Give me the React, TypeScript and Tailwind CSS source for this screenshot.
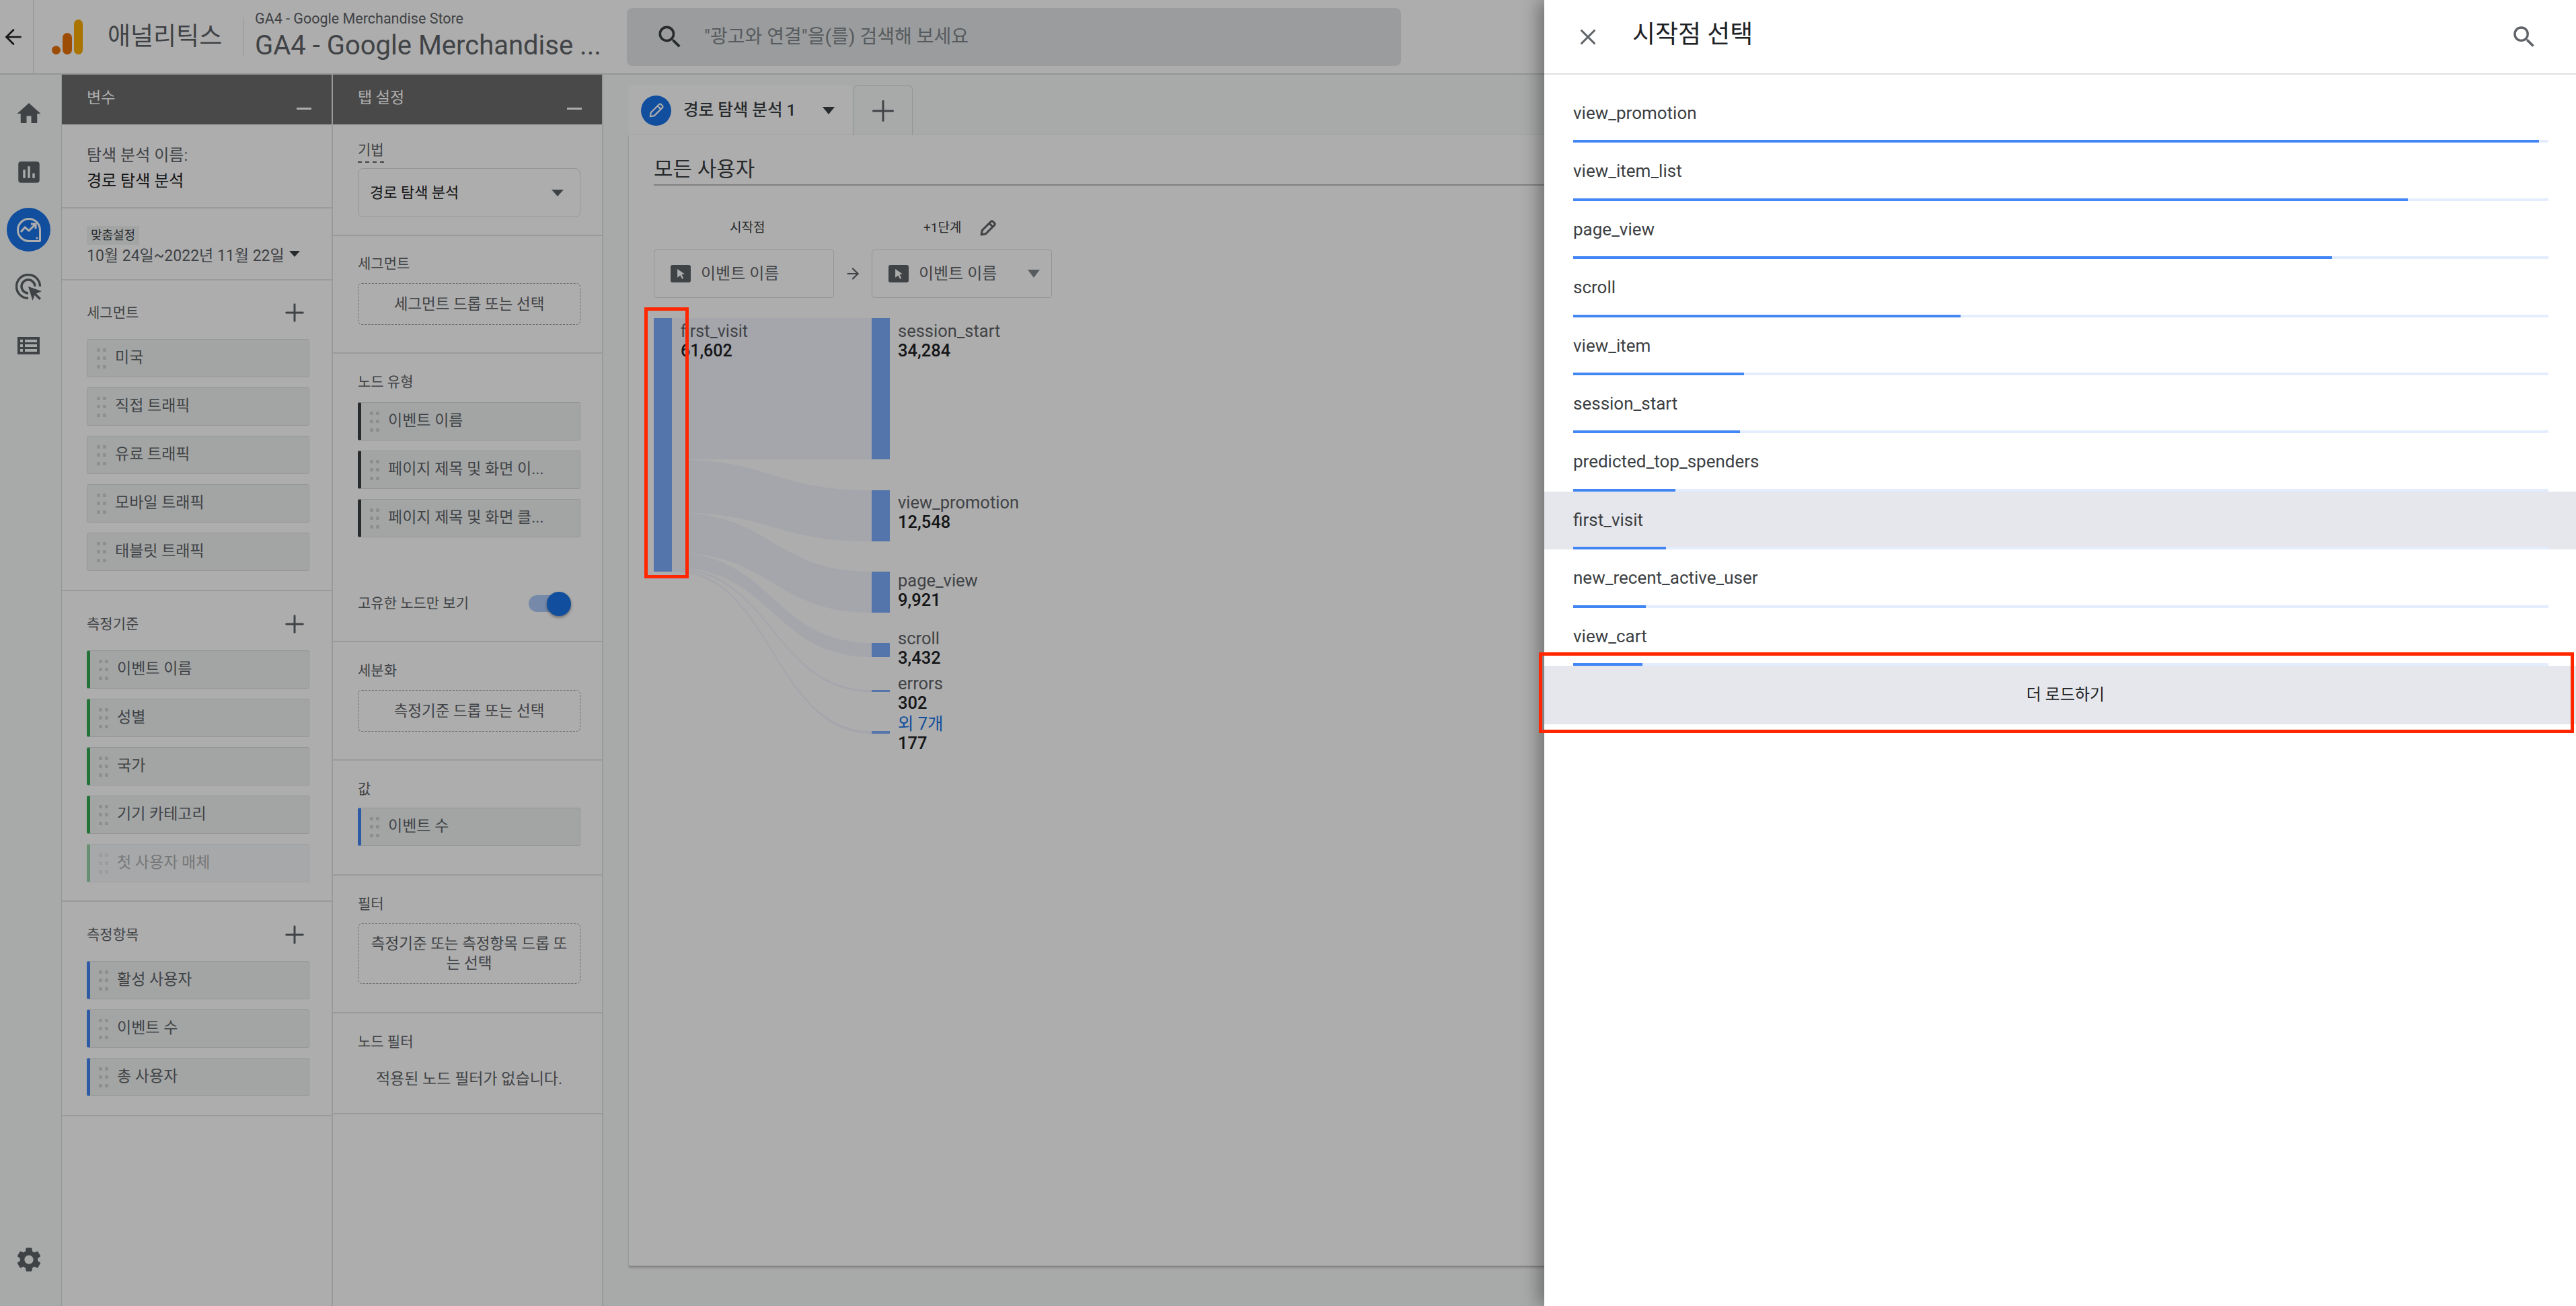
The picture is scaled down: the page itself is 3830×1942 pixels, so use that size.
import { ReactNode } from "react";
import { X, Plus, ArrowLeft, ArrowRight } from "lucide-react";

const drawerRows = [
  { name: "view_promotion", pct: 99 },
  { name: "view_item_list", pct: 85.6 },
  { name: "page_view", pct: 77.8 },
  { name: "scroll", pct: 39.7 },
  { name: "view_item", pct: 17.5 },
  { name: "session_start", pct: 17.1 },
  { name: "predicted_top_spenders", pct: 10.5 },
  { name: "first_visit", pct: 9.5, active: true },
  { name: "new_recent_active_user", pct: 7.45 },
  { name: "view_cart", pct: 7.1 },
];

const sankeyLabels = [
  { name: "session_start", value: "34,284", mt: "mt-0" },
  { name: "view_promotion", value: "12,548", mt: "mt-[197px]" },
  { name: "page_view", value: "9,921", mt: "mt-[58px]" },
  { name: "scroll", value: "3,432", mt: "mt-[28px]" },
  { name: "errors", value: "302", mt: "mt-[9px]" },
  { name: "외 7개", value: "177", mt: "mt-[2px]", link: true },
];

const Drag = () => (
  <span className="grid h-[30px] w-[14px] shrink-0 grid-cols-2 content-between gap-x-[4px]">
    {[0, 1, 2, 3, 4, 5].map((i) => (
      <span key={i} className="h-[5px] w-[5px] bg-[#d2d3d4]" />
    ))}
  </span>
);

interface ChipProps {
  label: string;
  accent?: string;
  dim?: boolean;
}

const Chip = ({ label, accent, dim }: ChipProps) => (
  <div
    className={`flex h-[57px] items-center gap-[13px] rounded-[3px] border border-[#dadce0] bg-[#f1f3f4] pr-3 ${
      accent ? `border-l-[5px] pl-[13px] ${accent}` : "pl-[14px]"
    } ${dim ? "opacity-50" : ""}`}
  >
    <Drag />
    <span className="truncate text-[23px] text-[#5f6368]">{label}</span>
  </div>
);

const PanelHeader = ({ title }: { title: string }) => (
  <div className="relative flex h-[74px] shrink-0 items-center bg-[#6c6c6c] pl-[37px] pb-[4px] text-[23px] text-white">
    {title}
    <span className="absolute bottom-[22px] right-[30px] h-[3px] w-[22px] bg-white" />
  </div>
);

const Section = ({
  className,
  children,
}: {
  className: string;
  children: ReactNode;
}) => <section className={`shrink-0 border-b-2 border-[#e3e3e3] ${className}`}>{children}</section>;

const ChipGroup = ({
  title,
  children,
  className,
}: {
  title: string;
  children: ReactNode;
  className: string;
}) => (
  <Section className={`pl-[37px] pr-[33px] ${className}`}>
    <div className="flex h-[36px] items-center justify-between">
      <span className="text-[21px] leading-[30px] text-[#5f6368]">{title}</span>
      <Plus className="mr-[1px] h-[42px] w-[42px] text-[#5f6368]" strokeWidth={1.7} />
    </div>
    <div className="mt-[21px] flex flex-col gap-[15px]">{children}</div>
  </Section>
);

const Dropzone = ({ children, className }: { children: ReactNode; className: string }) => (
  <div
    className={`mt-[14px] flex items-center justify-center rounded-[6px] border border-dashed border-[#9aa0a6] px-[14px] text-center text-[22.5px] leading-[29px] break-all text-[#5f6368] ${className}`}
  >
    {children}
  </div>
);

const Label = ({ children }: { children: ReactNode }) => (
  <div className="text-[21px] leading-[30px] text-[#5f6368]">{children}</div>
);

const VariablesPanel = () => (
  <div className="flex w-[403px] shrink-0 flex-col border-r-2 border-[#e3e3e3]">
    <PanelHeader title="변수" />
    <Section className="h-[125px] pl-[37px] pr-[33px] pt-[31px]">
      <div className="text-[24px] leading-[30px] text-[#5f6368]">탐색 분석 이름:</div>
      <div className="mt-[8px] text-[24px] leading-[30px] text-[#202124]">경로 탐색 분석</div>
    </Section>
    <Section className="h-[107px] pl-[37px] pr-[33px] pt-[26px]">
      <span className="block w-[78px] bg-[#f1f3f4] text-center text-[18px] leading-[28px] text-[#3c4043]">
        맞춤설정
      </span>
      <div className="flex items-start text-[23px] leading-[34px] text-[#5f6368]">
        10월 24일~2022년 11월 22일
        <span className="ml-[7px] mt-[9px] h-0 w-0 border-x-[8px] border-t-[9px] border-x-transparent border-t-[#3c4043]" />
      </div>
    </Section>
    <ChipGroup title="세그먼트" className="h-[462px] pt-[30px]">
      {["미국", "직접 트래픽", "유료 트래픽", "모바일 트래픽", "태블릿 트래픽"].map((s) => (
        <Chip key={s} label={s} />
      ))}
    </ChipGroup>
    <ChipGroup title="측정기준" className="h-[462px] pt-[31px]">
      <Chip label="이벤트 이름" accent="border-l-[#34a853]" />
      <Chip label="성별" accent="border-l-[#34a853]" />
      <Chip label="국가" accent="border-l-[#34a853]" />
      <Chip label="기기 카테고리" accent="border-l-[#34a853]" />
      <Chip label="첫 사용자 매체" accent="border-l-[#34a853]" dim />
    </ChipGroup>
    <ChipGroup title="측정항목" className="h-[319px] pt-[31px]">
      <Chip label="활성 사용자" accent="border-l-[#4285f4]" />
      <Chip label="이벤트 수" accent="border-l-[#4285f4]" />
      <Chip label="총 사용자" accent="border-l-[#4285f4]" />
    </ChipGroup>
  </div>
);

const SettingsPanel = () => (
  <div className="flex w-[402px] shrink-0 flex-col border-r-2 border-[#e3e3e3]">
    <PanelHeader title="탭 설정" />
    <Section className="h-[166px] border-b pl-[37px] pr-[32px] pt-[23px]">
      <div className="inline-block border-b-2 border-dashed border-[#5f6368] pb-[2px] text-[21px] leading-[30px] text-[#5f6368]">
        기법
      </div>
      <div className="mt-[8px] flex h-[73px] items-center justify-between rounded-[8px] border border-[#dadce0] pl-[17px] pr-[24px] text-[22px] text-[#202124]">
        경로 탐색 분석
        <span className="h-0 w-0 border-x-[9px] border-t-[10px] border-x-transparent border-t-[#5f6368]" />
      </div>
    </Section>
    <Section className="h-[175px] pl-[37px] pr-[32px] pt-[26px]">
      <Label>세그먼트</Label>
      <Dropzone className="h-[62px]">세그먼트 드롭 또는 선택</Dropzone>
    </Section>
    <Section className="h-[429px] pl-[37px] pr-[32px] pt-[27px]">
      <Label>노드 유형</Label>
      <div className="mt-[15px] flex flex-col gap-[15px]">
        <Chip label="이벤트 이름" accent="border-l-[#3c4043]" />
        <Chip label="페이지 제목 및 화면 이..." accent="border-l-[#3c4043]" />
        <Chip label="페이지 제목 및 화면 클..." accent="border-l-[#3c4043]" />
      </div>
      <div className="mt-[83px] flex items-center justify-between pr-[33px]">
        <Label>고유한 노드만 보기</Label>
        <span className="relative h-[25px] w-[44px] rounded-full bg-[#aecbfa]">
          <span className="absolute -right-[19px] -top-[5px] h-[36px] w-[36px] rounded-full bg-[#1a73e8] shadow-[0_2px_4px_rgba(0,0,0,0.4)]" />
        </span>
      </div>
    </Section>
    <Section className="h-[176px] pl-[37px] pr-[32px] pt-[27px]">
      <Label>세분화</Label>
      <Dropzone className="h-[62px]">측정기준 드롭 또는 선택</Dropzone>
    </Section>
    <Section className="h-[171px] pl-[37px] pr-[32px] pt-[27px]">
      <Label>값</Label>
      <div className="mt-[13px]">
        <Chip label="이벤트 수" accent="border-l-[#4285f4]" />
      </div>
    </Section>
    <Section className="h-[205px] pl-[37px] pr-[32px] pt-[27px]">
      <Label>필터</Label>
      <Dropzone className="h-[90px]">측정기준 또는 측정항목 드롭 또는 선택</Dropzone>
    </Section>
    <Section className="h-[150px] pl-[37px] pr-[32px] pt-[27px]">
      <Label>노드 필터</Label>
      <div className="mt-[26px] text-center text-[23px] leading-[30px] text-[#5f6368]">
        적용된 노드 필터가 없습니다.
      </div>
    </Section>
  </div>
);

const HomeIcon = () => (
  <svg viewBox="0 0 24 24" className="h-[42px] w-[42px] fill-[#5f6368]">
    <path d="M10 20v-6h4v6h5v-8h3L12 3 2 12h3v8z" />
  </svg>
);

const ReportsIcon = () => (
  <svg viewBox="0 0 24 24" className="h-[42px] w-[42px] fill-[#5f6368]">
    <path d="M19 3H5c-1.1 0-2 .9-2 2v14c0 1.1.9 2 2 2h14c1.1 0 2-.9 2-2V5c0-1.1-.9-2-2-2zM9 17H7v-7h2v7zm4 0h-2V7h2v10zm4 0h-2v-4h2v4z" />
  </svg>
);

const ExploreIcon = () => (
  <svg viewBox="0 0 40 40" className="h-[40px] w-[40px]" fill="none" stroke="#fff" strokeWidth="3">
    <path d="M20 3.5a16.5 16.5 0 0 0 0 33h15.5a1 1 0 0 0 1-1V20A16.5 16.5 0 0 0 20 3.5z" />
    <path d="M8 23l6-7 6 5 9-9M23 11h7v7" />
    <circle cx="32" cy="32" r="1.6" fill="#fff" stroke="none" />
  </svg>
);

const AdvertisingIcon = () => (
  <svg viewBox="0 0 40 40" className="h-[40px] w-[40px]" fill="none" stroke="#5f6368" strokeWidth="3.4">
    <path d="M19 36.5A17.5 17.5 0 1 1 36.5 19" />
    <path d="M19 29A10 10 0 1 1 29 19" />
    <path d="M19 19l20 7-8 3.5 7 7-2.5 2.5-7-7-3 8z" fill="#5f6368" stroke="none" />
  </svg>
);

const ListIcon = () => (
  <svg viewBox="0 0 33 26" className="h-[26px] w-[33px]">
    <path
      fill="#5f6368"
      fillRule="evenodd"
      d="M0 0h33v26H0zM4 4v4h4V4zm7 0v4h18V4zM4 11v4h4v-4zm7 0v4h18v-4zM4 18v4h4v-4zm7 0v4h18v-4z"
    />
  </svg>
);

const SettingsIcon = () => (
  <svg viewBox="0 0 24 24" className="h-[44px] w-[44px] fill-[#5f6368]">
    <path d="M19.14 12.94c.04-.3.06-.61.06-.94 0-.32-.02-.64-.07-.94l2.03-1.58c.18-.14.23-.41.12-.61l-1.92-3.32c-.12-.22-.37-.29-.59-.22l-2.39.96c-.5-.38-1.03-.7-1.62-.94L14.4 2.81c-.04-.24-.24-.41-.48-.41h-3.84c-.24 0-.43.17-.47.41L9.25 5.35c-.59.24-1.13.57-1.62.94l-2.39-.96c-.22-.08-.47 0-.59.22L2.74 8.87c-.12.21-.08.47.12.61l2.03 1.58c-.05.3-.09.63-.09.94s.02.64.07.94l-2.03 1.58c-.18.14-.23.41-.12.61l1.92 3.32c.12.22.37.29.59.22l2.39-.96c.5.38 1.03.7 1.62.94l.36 2.54c.05.24.24.41.48.41h3.84c.24 0 .44-.17.47-.41l.36-2.54c.59-.24 1.13-.56 1.62-.94l2.39.96c.22.08.47 0 .59-.22l1.92-3.32c.12-.22.07-.47-.12-.61l-2.01-1.58zM12 15.6c-1.98 0-3.6-1.62-3.6-3.6s1.62-3.6 3.6-3.6 3.6 1.62 3.6 3.6-1.62 3.6-3.6 3.6z" />
  </svg>
);

const SearchIcon = ({ className }: { className: string }) => (
  <svg viewBox="0 0 24 24" className={className}>
    <path d="M15.5 14h-.79l-.28-.27A6.471 6.471 0 0 0 16 9.5 6.5 6.5 0 1 0 9.5 16c1.61 0 3.09-.59 4.23-1.57l.27.28v.79l5 4.99L20.49 19l-4.99-5zm-6 0C7.01 14 5 11.99 5 9.5S7.01 5 9.5 5 14 7.01 14 9.5 11.99 14 9.5 14z" />
  </svg>
);

const PencilIcon = ({ className, stroke, width }: { className: string; stroke: string; width: number }) => (
  <svg viewBox="0 0 24 24" className={className} fill="none" stroke={stroke} strokeWidth={width} strokeLinejoin="round">
    <path d="M3.5 20.5l1-5.5L15.8 3.7a1.6 1.6 0 0 1 2.3 0l2.2 2.2a1.6 1.6 0 0 1 0 2.3L9 19.5z" />
    <path d="M13.5 6l4.5 4.5" />
  </svg>
);

const EventBadge = () => (
  <span className="flex h-[26px] w-[30px] shrink-0 items-center justify-center rounded-[3px] bg-[#5f6368]">
    <svg viewBox="0 0 12 14" className="h-[15px] w-[13px] fill-white">
      <path d="M1 0l10 7-4 .8 2.5 5-2 1-2.5-5L1 12z" />
    </svg>
  </span>
);

const SideNav = () => (
  <nav className="flex w-[92px] shrink-0 flex-col items-center border-r border-[#dadce0] bg-[#f8f9fa] pb-[47px] pr-[6px]">
    <div className="mt-[37px]">
      <HomeIcon />
    </div>
    <div className="mt-[45px]">
      <ReportsIcon />
    </div>
    <div className="mt-[32px] flex h-[65px] w-[65px] items-center justify-center rounded-full bg-[#1a73e8]">
      <ExploreIcon />
    </div>
    <div className="mt-[33px]">
      <AdvertisingIcon />
    </div>
    <div className="mt-[54px]">
      <ListIcon />
    </div>
    <div className="mt-auto">
      <SettingsIcon />
    </div>
  </nav>
);

const TopBar = () => (
  <header className="flex h-[111px] shrink-0 items-center border-b-2 border-[#dadce0] bg-white">
    <div className="flex h-full w-[50px] shrink-0 items-center justify-center border-r border-[#dadce0] pr-[10px]">
      <ArrowLeft className="h-[36px] w-[36px] shrink-0 text-[#202124]" strokeWidth={1.8} />
    </div>
    <svg viewBox="0 0 46 52" className="ml-[27px] h-[52px] w-[46px] shrink-0">
      <rect x="33" y="0" width="13" height="52" rx="6.5" fill="#f9ab00" />
      <rect x="16" y="20" width="14" height="32" rx="7" fill="#e8710a" />
      <circle cx="6.5" cy="45.5" r="6.5" fill="#e8710a" />
    </svg>
    <span className="ml-[37px] w-[201px] shrink-0 text-[37px] text-[#5f6368]">애널리틱스</span>
    <div className="h-[57px] w-px shrink-0 bg-[#dadce0]" />
    <div className="ml-[17px] w-[535px] shrink-0">
      <div className="-mt-[3px] text-[21.5px] leading-[26px] text-[#5f6368]">GA4 - Google Merchandise Store</div>
      <div className="mt-[3px] truncate text-[40px] leading-[48px] text-[#5f6368]">
        GA4 - Google Merchandise ...
      </div>
    </div>
    <div className="ml-[18px] flex h-[86px] w-[1151px] shrink-0 items-center rounded-[8px] bg-[#e4e6e8] pl-[42px]">
      <SearchIcon className="h-[44px] w-[44px] fill-[#3c4043]" />
      <span className="ml-[29px] text-[28px] text-[#80868b]">"광고와 연결"을(를) 검색해 보세요</span>
    </div>
  </header>
);

const SankeyLinks = () => (
  <svg viewBox="0 0 297 620" className="h-[620px] w-[297px] shrink-0">
    <g fill="#f3f5fe">
      <path d="M0 0H297V210H0z" />
      <path d="M0 210C150 210 150 256 297 256V332C150 332 150 289 0 289z" />
      <path d="M0 289C150 289 150 377 297 377V438C150 438 150 349 0 349z" />
      <path d="M0 349C150 349 150 483 297 483V504C150 504 150 371 0 371z" />
      <path d="M0 371C150 371 150 553 297 553V556C150 556 150 374 0 374z" />
      <path d="M0 374C150 374 150 614 297 614V618C150 618 150 377 0 377z" />
    </g>
  </svg>
);

const Sankey = () => (
  <div className="mt-[30px] flex">
    <div className="h-[377px] w-[27px] shrink-0 bg-[#7dacfe]" />
    <div className="relative">
      <SankeyLinks />
      <div className="absolute left-[13px] top-[5px] text-[25px] leading-[29px] text-[#5f6368]">
        first_visit
        <div className="font-medium text-[#202124]">61,602</div>
      </div>
    </div>
    <div className="relative h-[620px] w-[27px] shrink-0">
      <div className="h-[210px] bg-[#7dacfe]" />
      <div className="mt-[46px] h-[76px] bg-[#7dacfe]" />
      <div className="mt-[45px] h-[61px] bg-[#7dacfe]" />
      <div className="mt-[45px] h-[21px] bg-[#7dacfe]" />
      <div className="mt-[49px] h-[3px] bg-[#7dacfe]" />
      <div className="mt-[58px] h-[4px] bg-[#7dacfe]" />
    </div>
    <div className="ml-[12px] pt-[5px] text-[25.5px] leading-[29px]">
      {sankeyLabels.map((l) => (
        <div key={l.name} className={l.mt}>
          <div className={l.link ? "text-[#1a73e8]" : "text-[#5f6368]"}>{l.name}</div>
          <div className="font-medium text-[#202124]">{l.value}</div>
        </div>
      ))}
    </div>
  </div>
);

const StepBox = ({ caret }: { caret?: boolean }) => (
  <div className="flex h-[72px] w-[268px] items-center rounded-[4px] border border-[#dadce0] pl-[24px] pr-[17px]">
    <EventBadge />
    <span className="ml-[15px] flex-1 text-[24px] text-[#5f6368]">이벤트 이름</span>
    {caret && (
      <span className="h-0 w-0 border-x-[9px] border-t-[12px] border-x-transparent border-t-[#80868b]" />
    )}
  </div>
);

const Canvas = () => (
  <main className="flex min-w-0 flex-1 flex-col bg-[#f8f9fa] pl-[38px] pb-[58px] pt-[16px]">
    <div className="flex h-[74px] shrink-0 items-stretch gap-[2px]">
      <div className="flex w-[332px] items-center rounded-t-[6px] bg-white pl-[18px]">
        <span className="flex h-[45px] w-[45px] items-center justify-center rounded-full bg-[#1a73e8]">
          <PencilIcon className="h-[26px] w-[26px]" stroke="#fff" width={2} />
        </span>
        <span className="ml-[18px] text-[24.5px] font-medium text-[#3c4043]">경로 탐색 분석 1</span>
        <span className="ml-[40px] h-0 w-0 border-x-[9px] border-t-[11px] border-x-transparent border-t-[#3c4043]" />
      </div>
      <div className="flex w-[88px] items-center justify-center rounded-t-[6px] border border-b-0 border-[#dadce0]">
        <Plus className="h-[50px] w-[50px] text-[#5f6368]" strokeWidth={1.4} />
      </div>
    </div>
    <div className="min-h-0 flex-1 border-b-2 border-[#c4c4c4] bg-white px-[37px] pt-[31px] shadow-[0_1px_3px_rgba(0,0,0,0.2)]">
      <div className="border-b-2 border-[#bdbdbd] pb-[2px] text-[31px] leading-[40px] text-[#3c4043]">모든 사용자</div>
      <div className="mt-[49px] flex text-[19px] leading-[28px] text-[#3c4043]">
        <span className="ml-[113px] w-[288px]">시작점</span>
        <span>+1단계</span>
        <PencilIcon className="ml-[26px] h-[28px] w-[28px]" stroke="#5f6368" width={2.6} />
      </div>
      <div className="mt-[18px] flex items-center">
        <StepBox />
        <ArrowRight className="mx-[15px] h-[26px] w-[26px] text-[#5f6368]" strokeWidth={2} />
        <StepBox caret />
      </div>
      <Sankey />
    </div>
  </main>
);

const Drawer = () => (
  <aside className="absolute bottom-0 right-0 top-0 w-[1534px] bg-white shadow-[-8px_0_24px_rgba(0,0,0,0.35)]">
    <div className="flex h-[111px] items-center border-b-2 border-[#e0e0e0] pl-[46px] pr-[56px]">
      <X className="h-[38px] w-[38px] text-[#5f6368]" strokeWidth={2} />
      <span className="ml-[47px] pb-[6px] text-[37px] text-[#202124]">시작점 선택</span>
      <SearchIcon className="ml-auto h-[42px] w-[42px] fill-[#5f6368]" />
    </div>
    <div className="pt-[15px]">
      {drawerRows.map((row) => (
        <div
          key={row.name}
          className={`flex h-[86.4px] flex-col justify-between pl-[43px] pr-[41px] ${row.active ? "bg-[#e6e7ec]" : ""}`}
        >
          <span className="mt-[27px] text-[26px] leading-[30px] text-[#3c4043]">{row.name}</span>
          <div className="h-[4px] bg-[#e3edfd]">
            <div className="h-full bg-[#4285f4]" style={{ width: `${row.pct}%` }} />
          </div>
        </div>
      ))}
      <div className="flex h-[87px] items-center justify-center bg-[#e6e7ec] pl-[16px] text-[24px] text-[#202124]">
        더 로드하기
      </div>
    </div>
  </aside>
);

export default function App() {
  return (
    <div className="relative flex h-[1942px] w-[3830px] flex-col overflow-hidden bg-white font-[Roboto,'Noto_Sans_CJK_KR',sans-serif]">
      <TopBar />
      <div className="flex min-h-0 flex-1">
        <SideNav />
        <VariablesPanel />
        <SettingsPanel />
        <Canvas />
      </div>
      <div className="absolute inset-0 bg-black/32" />
      <Drawer />
      <div className="absolute left-[958px] top-[457px] h-[403px] w-[66px] border-[5px] border-[#ff2600]" />
      <div className="absolute left-[2288px] top-[970px] h-[120px] w-[1539px] border-[5px] border-[#ff2600]" />
    </div>
  );
}
